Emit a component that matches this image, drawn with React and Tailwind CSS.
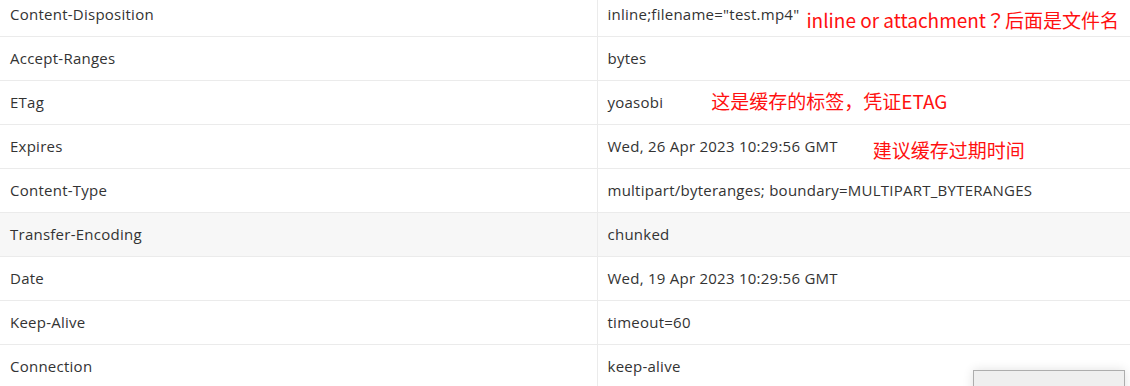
import React from 'react';

const rows = [
  { k: 'Content-Disposition', v: 'inline;filename="test.mp4"', note: 'file' },
  { k: 'Accept-Ranges', v: 'bytes' },
  { k: 'ETag', v: 'yoasobi', note: 'etag' },
  { k: 'Expires', v: 'Wed, 26 Apr 2023 10:29:56 GMT', note: 'expires' },
  { k: 'Content-Type', v: 'multipart/byteranges; boundary=MULTIPART_BYTERANGES' },
  { k: 'Transfer-Encoding', v: 'chunked' },
  { k: 'Date', v: 'Wed, 19 Apr 2023 10:29:56 GMT' },
  { k: 'Keep-Alive', v: 'timeout=60' },
  { k: 'Connection', v: 'keep-alive' },
];

const noteCls =
  "whitespace-nowrap font-['Noto_Sans_CJK_SC',sans-serif] text-[19px] leading-[26px] tracking-normal text-[#ff1010]";

function Note({ kind }) {
  if (kind === 'file')
    return (
      <span className={`${noteCls} ml-[7px] mt-[12px] tracking-[-0.3px]`}>
        inline or attachment
        <span className="font-['Noto_Sans_CJK_TC',sans-serif]">？</span>
        后面是文件名
      </span>
    );
  if (kind === 'etag')
    return <span className={`${noteCls} ml-[48px] -mt-[2px]`}>这是缓存的标签，凭证ETAG</span>;
  if (kind === 'expires')
    return <span className={`${noteCls} ml-[35px] mt-[8px]`}>建议缓存过期时间</span>;
  return null;
}

export default function App() {
  return (
    <div className="relative h-[386px] w-[1130px] overflow-hidden bg-white font-['Open_Sans','Noto_Sans_CJK_SC',sans-serif] text-[15px] tracking-[0.25px] text-[#333]">
      <table className="-mt-[8px] w-full border-collapse">
        <tbody>
          {rows.map((r) => (
            <tr
              key={r.k}
              className={r.k === 'Transfer-Encoding' ? 'bg-[#f7f7f7]' : 'bg-white'}
            >
              <td className="h-[44px] w-[597px] border-b border-r border-[#ebebeb] pl-[10px] align-middle">
                {r.k}
              </td>
              <td className="h-[44px] border-b border-[#ebebeb] p-0 pl-[10px] align-middle">
                <div className="flex h-[43px] items-center">
                  <span className="whitespace-nowrap">{r.v}</span>
                  {r.note && <Note kind={r.note} />}
                </div>
              </td>
            </tr>
          ))}
        </tbody>
      </table>

      {/* floating widget peeking in at the bottom right */}
      <div className="absolute left-[973px] top-[370px] h-[40px] w-[152px] border border-[#adadad] bg-[#efefef] shadow-[0_0_10px_rgba(0,0,0,0.12)]" />
    </div>
  );
}
